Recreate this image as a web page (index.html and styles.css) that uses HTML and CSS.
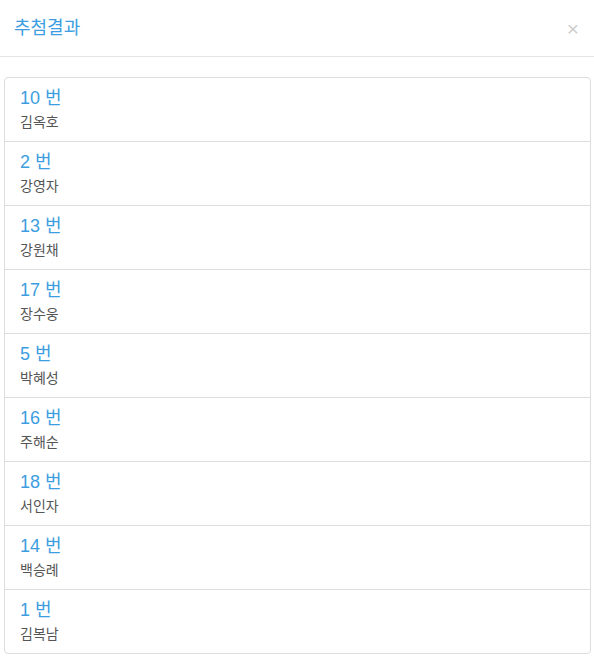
FILE: index.html
```html
<!DOCTYPE html>
<html lang="ko">

<head>
    <meta charset="UTF-8">
    <meta name="viewport" content="width=device-width, initial-scale=1.0">
    <title>추첨결과</title>
    <link rel="stylesheet" href="styles.css">
</head>

<body>

    <div class="modal-content">
        <div class="modal-header">
            <button type="button" class="close">&times;</button>
            <h4 class="modal-title">추첨결과</h4>
        </div>
        <div class="modal-body">
            <div class="list-group">
                <div class="list-group-item">
                    <h4 class="item-heading">10 번</h4>
                    <p class="item-text">김옥호</p>
                </div>
                <div class="list-group-item">
                    <h4 class="item-heading">2 번</h4>
                    <p class="item-text">강영자</p>
                </div>
                <div class="list-group-item">
                    <h4 class="item-heading">13 번</h4>
                    <p class="item-text">강원채</p>
                </div>
                <div class="list-group-item">
                    <h4 class="item-heading">17 번</h4>
                    <p class="item-text">장수웅</p>
                </div>
                <div class="list-group-item">
                    <h4 class="item-heading">5 번</h4>
                    <p class="item-text">박혜성</p>
                </div>
                <div class="list-group-item">
                    <h4 class="item-heading">16 번</h4>
                    <p class="item-text">주해순</p>
                </div>
                <div class="list-group-item">
                    <h4 class="item-heading">18 번</h4>
                    <p class="item-text">서인자</p>
                </div>
                <div class="list-group-item">
                    <h4 class="item-heading">14 번</h4>
                    <p class="item-text">백승례</p>
                </div>
                <div class="list-group-item">
                    <h4 class="item-heading">1 번</h4>
                    <p class="item-text">김복남</p>
                </div>
            </div>
        </div>
    </div>

</body>

</html>
```

FILE: styles.css
```css
* {
    box-sizing: border-box;
}

body {
    margin: 0;
    background-color: #fff;
    font-family: "Liberation Sans", "Noto Sans CJK KR", sans-serif;
    font-size: 14px;
    line-height: 20px;
    color: #333;
}

.modal-content {
    background-color: #fff;
}

.modal-header {
    padding: 16px 15px 15px 14px;
    height: 57px;
    border-bottom: 1px solid #e5e5e5;
}

.modal-title {
    margin: 0;
    font-size: 18px;
    font-weight: 400;
    line-height: 24px;
    color: #3c9ee0;
}

.close {
    float: right;
    margin-top: 2px;
    margin-right: 0;
    padding: 0;
    border: 0;
    background: transparent;
    font-family: "Liberation Sans", sans-serif;
    font-size: 21px;
    font-weight: 400;
    line-height: 1;
    color: #000;
    opacity: .2;
    cursor: pointer;
}

.modal-body {
    padding: 20px 3px 4px 4px;
}

.list-group {
    display: flex;
    flex-direction: column;
}

.list-group-item {
    padding: 11px 15px 9px;
    margin-bottom: -1px;
    border: 1px solid #ddd;
    background-color: #fff;
}

.list-group-item:first-child {
    border-top-left-radius: 4px;
    border-top-right-radius: 4px;
}

.list-group-item:last-child {
    margin-bottom: 0;
    border-bottom-left-radius: 4px;
    border-bottom-right-radius: 4px;
}

.item-heading {
    margin: 0 0 5px;
    font-size: 18px;
    font-weight: 400;
    line-height: 19px;
    color: #3c9ee0;
}

.item-text {
    margin: 0;
    line-height: 19px;
    color: #555;
}
```
